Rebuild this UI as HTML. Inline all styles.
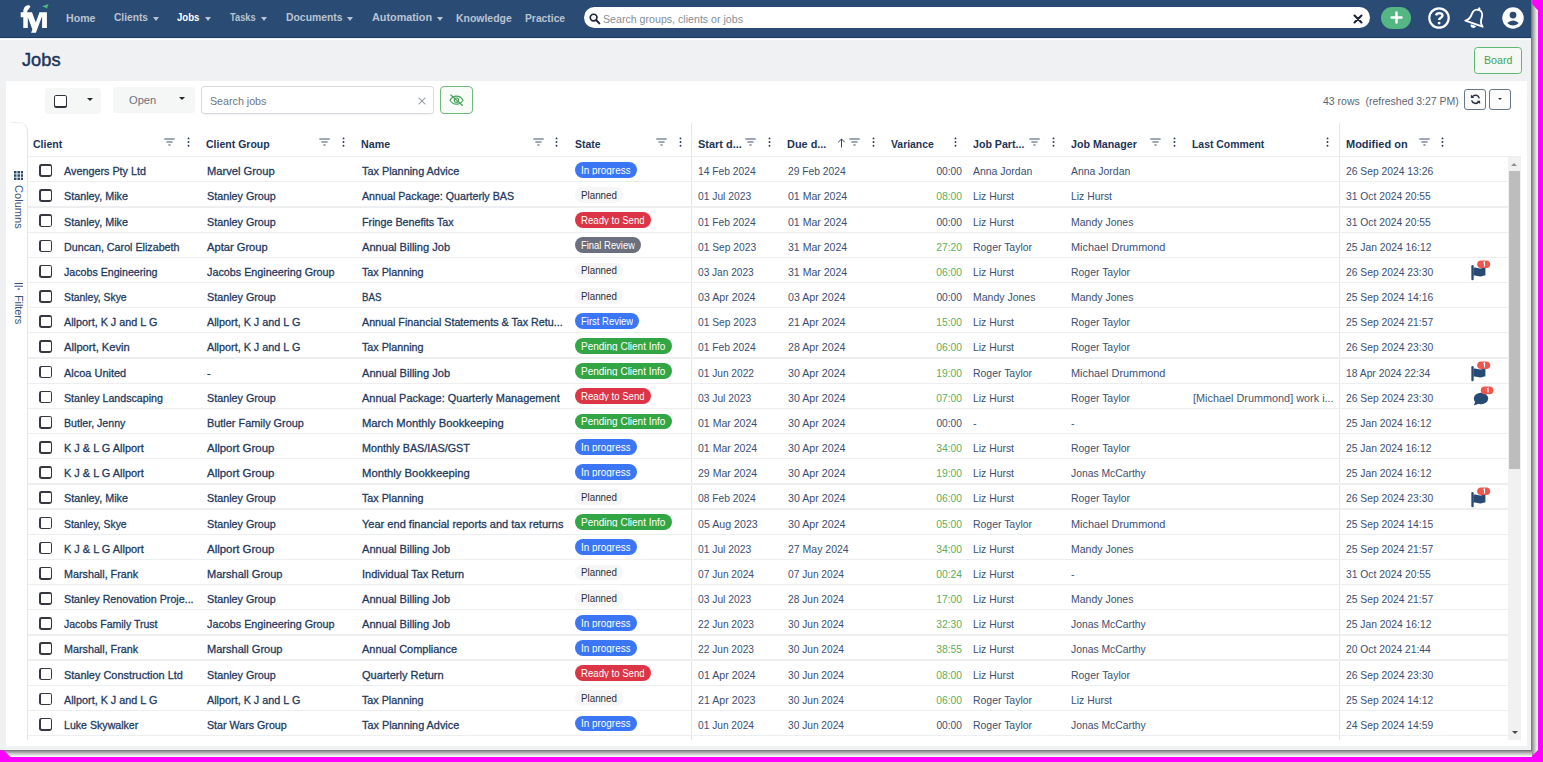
<!DOCTYPE html><html><head><meta charset="utf-8"><title>Jobs</title><style>
*{box-sizing:border-box}
html,body{margin:0;padding:0}
body{width:1543px;height:762px;background:#ff00ff;position:relative;overflow:hidden;font-family:"Liberation Sans",sans-serif;color:#213b61}
#app{position:absolute;left:0;top:0;width:1531px;height:750px;background:#f0f1f3;overflow:hidden}
.abs{position:absolute}
#nav{position:absolute;left:0;top:0;width:100%;height:38.2px;background:#2a4b73;border-bottom:1.3px solid #1d3b66}
#navline{position:absolute;left:0;top:38.2px;width:100%;height:1.8px;background:linear-gradient(180deg,#b9c3d1 0%,#fff 35%,#fff 100%)}
.nv{position:absolute;top:11.3px;font-size:10.6px;font-weight:bold;color:#b9c3d1;white-space:nowrap;line-height:13px;transform-origin:0 0}
.nv.act{color:#fff}
.caret{position:absolute;top:16.9px;width:0;height:0;border-left:3.3px solid transparent;border-right:3.3px solid transparent;border-top:4px solid #b9c3d1}
#title{position:absolute;left:22px;top:47px;font-size:19.5px;line-height:24px;color:#1d3557;-webkit-text-stroke:0.35px #1d3557}
#panel{position:absolute;left:5.5px;top:80.5px;width:1521.5px;height:665px;background:#fff}
.t{position:absolute;white-space:nowrap;font-size:11px;line-height:14px;color:#3a5073;transform-origin:0 0}
.t.b{color:#21395e;-webkit-text-stroke:0.28px #21395e}
.t.g{color:#5cae5c}
.t.c{color:#44566f}
.t.r{text-align:right;transform-origin:100% 0}
.h{position:absolute;white-space:nowrap;font-size:11px;line-height:14px;font-weight:bold;color:#1d3557;top:136.6px;transform-origin:0 0}
.hl{position:absolute;left:28px;width:1480px;height:1.3px;background:#eceef0}
.cb{position:absolute;left:39.3px;width:13px;height:12.7px;border-radius:2.4px;background:#353841}
.cb i{position:absolute;left:1.6px;top:1.6px;right:1.6px;bottom:1.6px;background:#fff;border-radius:0.9px}
.pill{position:absolute;left:574.9px;height:15.8px;border-radius:8px;color:#fff;overflow:hidden}
.pill span{position:absolute;left:6.5px;top:1.75px;font-size:10px;line-height:13px;height:11.3px;overflow:hidden;white-space:nowrap;transform-origin:0 0}
.p-blue{background:#3a76f5}
.p-red{background:#dc3545}
.p-grey{background:#6c6f7d}
.p-green{background:#32a544}
.p-light{background:#f6f6f7;color:#2c2f36}
.ic-f{position:absolute;top:138.3px}
.ic-m{position:absolute;top:137.3px}
.ic-a{position:absolute;top:137.5px}
.ric{position:absolute}
.vline{position:absolute;width:1.2px;background:#e4e7ea}
</style></head><body>
<div id="app">
<div id="nav"></div><div id="navline"></div>
<svg class="abs" style="left:0;top:0" width="60" height="38" viewBox="0 0 60 38">
<path d="M20.7 12.3H23.3C23.3 9 24.6 5.2 28 5.2C29.6 5.2 30.6 5.8 30.2 6.9C29.8 8.4 27.4 9.4 27 12.3H32L35.8 22.4L39.5 12.3H46.9V27.9H42.1V16.2L35.9 32.7H31.1L32.4 29.5L27.8 17.2V27.9H23.3V17.2H20.7Z" fill="#fff"/>
<path d="M41.9 6.2L48.6 4L46.9 8.7L45 7.6Z" fill="#44b978"/>
</svg>
<div class="nv" style="left:66px;top:12.3px;transform:scaleX(1.0021)">Home</div>
<div class="nv" style="left:113.7px;top:11.3px;transform:scaleX(0.9624)">Clients</div>
<div class="caret" style="left:152.8px"></div>
<div class="nv act" style="left:177.4px;top:11.3px;transform:scaleX(0.9056)">Jobs</div>
<div class="caret" style="left:204.7px"></div>
<div class="nv" style="left:229.6px;top:11.3px;transform:scaleX(0.8782)">Tasks</div>
<div class="caret" style="left:260.7px"></div>
<div class="nv" style="left:285.7px;top:11.3px;transform:scaleX(0.9811)">Documents</div>
<div class="caret" style="left:347.1px"></div>
<div class="nv" style="left:372px;top:11.3px;transform:scaleX(1.0211)">Automation</div>
<div class="caret" style="left:437px"></div>
<div class="nv" style="left:456.3px;top:12.3px;transform:scaleX(0.9873)">Knowledge</div>
<div class="nv" style="left:525px;top:12.3px;transform:scaleX(0.9725)">Practice</div>
<div class="abs" style="left:584.3px;top:7px;width:786px;height:21.4px;border-radius:10.7px;background:#fff"></div>
<svg class="abs" style="left:588.8px;top:13.2px" width="12" height="12" viewBox="0 0 12 12"><circle cx="4.6" cy="4.6" r="3.35" stroke="#1b2638" stroke-width="1.7" fill="none"/><path d="M7.2 7.2L10.4 10.4" stroke="#1b2638" stroke-width="2" stroke-linecap="round"/></svg>
<div class="abs" style="left:603px;top:11.74px;font-size:11.3px;line-height:14.69px;color:#858e99;white-space:nowrap;transform-origin:0 0;transform:scaleX(0.9407);">Search groups, clients or jobs</div>
<svg class="abs" style="left:1352.8px;top:13.6px" width="10" height="10" viewBox="0 0 10 10"><path d="M1.5 1.5L8.5 8.5M8.5 1.5L1.5 8.5" stroke="#1c2430" stroke-width="2.1" stroke-linecap="round"/></svg>
<div class="abs" style="left:1381.2px;top:6.8px;width:29.8px;height:22.4px;border-radius:11.2px;background:#53b683"></div>
<svg class="abs" style="left:1390.1px;top:11.1px" width="13" height="13" viewBox="0 0 13 13"><path d="M6.5 1.5V11.5M1.5 6.5H11.5" stroke="#fff" stroke-width="2.4" stroke-linecap="round"/></svg>
<svg class="abs" style="left:1427.2px;top:6.3px" width="24" height="24" viewBox="-12 -12 24 24"><circle cx="0" cy="0" r="9.7" stroke="#fff" stroke-width="2.2" fill="none"/><path d="M-3 -2.6C-2.6 -4.1 -1.4 -4.8 0.2 -4.8C2.2 -4.8 3.5 -3.8 3.5 -2.4C3.5 -0.2 0.1 -0.3 0.1 2.1" stroke="#fff" stroke-width="2.4" fill="none"/><circle cx="0.1" cy="5.1" r="1.45" fill="#fff"/></svg>
<svg class="abs" style="left:1461.65px;top:4.1px" width="28" height="28" viewBox="-14 -14 28 28"><g transform="rotate(19.5)"><path d="M-9.2 6C-7 4.5 -5.3 2.5 -5.3 -2C-5.3 -6 -3 -8.6 0 -8.6C3 -8.6 5.3 -6 5.3 -2C5.3 2.5 7 4.5 9.2 6Z" stroke="#fff" stroke-width="1.9" fill="none" stroke-linejoin="round"/><path d="M0 -8.6V-10.1" stroke="#fff" stroke-width="2.2" stroke-linecap="round"/><path d="M-2.8 7.6A2.8 2.8 0 0 0 2.8 7.6Z" fill="#fff"/></g></svg>
<svg class="abs" style="left:1500.7px;top:6.35px" width="24" height="24" viewBox="-12 -12 24 24"><circle cx="0" cy="0" r="10.75" fill="#fff"/><circle cx="0" cy="-2.9" r="3.4" fill="#2a4b73"/><path d="M-5.9 5Q0 -0.2 5.9 5Q0 10.2 -5.9 5Z" fill="#2a4a72"/></svg>
<div class="abs" style="left:22.4px;top:48.07px;font-size:18.9px;line-height:24.57px;color:#1d3557;white-space:nowrap;transform-origin:0 0;transform:scaleX(0.9648);-webkit-text-stroke:0.45px #1d3557;">Jobs</div>
<div class="abs" style="left:1474px;top:46.8px;width:47.6px;height:27.1px;border:1.4px solid #5fb871;border-radius:3.5px;background:#f5f8f5"></div>
<div class="abs" style="left:1483.5px;top:52.84px;font-size:11.2px;line-height:14.56px;color:#3fa556;white-space:nowrap;transform-origin:0 0;transform:scaleX(0.9511);">Board</div>
<div id="panel"></div>
<div class="abs" style="left:44.8px;top:87.9px;width:56.3px;height:26px;background:#f5f6f6;border-radius:3px"></div>
<div class="abs" style="left:53.6px;top:94.7px;width:13.6px;height:13.4px;border-radius:2.5px;background:#2f323b"><i style="position:absolute;left:1.7px;top:1.7px;right:1.7px;bottom:1.7px;background:#fff;border-radius:0.9px"></i></div>
<div class="abs" style="left:87px;top:98px;width:0;height:0;border-left:3.2px solid transparent;border-right:3.2px solid transparent;border-top:3.9px solid #23272e"></div>
<div class="abs" style="left:113.3px;top:86.8px;width:82px;height:26px;background:#f5f6f6;border-radius:3px"></div>
<div class="abs" style="left:128.8px;top:93.14px;font-size:11px;line-height:14.3px;color:#6b737f;white-space:nowrap;transform-origin:0 0;transform:scaleX(1.0103);">Open</div>
<div class="abs" style="left:179px;top:97.3px;width:0;height:0;border-left:3.4px solid transparent;border-right:3.4px solid transparent;border-top:3.9px solid #23272e"></div>
<div class="abs" style="left:200.5px;top:86.1px;width:233.9px;height:27.8px;background:#fff;border:1.2px solid #d6d9dd;border-radius:3.5px;box-shadow:0 0.5px 1px rgba(0,0,0,.05)"></div>
<div class="abs" style="left:210px;top:93.64px;font-size:11.2px;line-height:14.56px;color:#6e7783;white-space:nowrap;transform-origin:0 0;transform:scaleX(0.9544);">Search jobs</div>
<svg class="abs" style="left:417.6px;top:96.6px" width="8" height="8" viewBox="0 0 8 8"><path d="M0.6 0.6L7.4 7.4M7.4 0.6L0.6 7.4" stroke="#9aa0a8" stroke-width="1.05"/></svg>
<div class="abs" style="left:439.8px;top:86.1px;width:33.1px;height:27.8px;background:#f8fbf8;border:1.3px solid #6dbb7a;border-radius:4px"></div>
<svg class="abs" style="left:449px;top:93.6px" width="15" height="12.4" viewBox="0 0 15 12.4"><path d="M1 6.2C2.6 3.6 4.8 2.2 7.5 2.2C10.2 2.2 12.4 3.6 14 6.2C12.4 8.8 10.2 10.2 7.5 10.2C4.8 10.2 2.6 8.8 1 6.2Z" stroke="#45a35a" stroke-width="1.15" fill="none"/><circle cx="7.5" cy="6.2" r="2.2" stroke="#45a35a" stroke-width="1.15" fill="none"/><path d="M1.4 0.6L13.8 11.8" stroke="#45a35a" stroke-width="1.25"/></svg>
<div class="abs" style="left:1322.5px;top:93.94px;font-size:11px;line-height:14.3px;color:#5d6673;white-space:nowrap;transform-origin:0 0;transform:scaleX(0.9533);">43 rows&nbsp; (refreshed 3:27 PM)</div>
<div class="abs" style="left:1463.7px;top:88.5px;width:22.1px;height:21.8px;border:1.2px solid #68748a;border-radius:3px;background:#fcfcfd"></div>
<svg class="abs" style="left:1469.5px;top:94.3px" width="11" height="10.6" viewBox="0 0 11 10.6"><path d="M9.3 4.3A3.9 3.9 0 0 0 2.3 2.9M1.7 6.3A3.9 3.9 0 0 0 8.7 7.7" stroke="#2d333d" stroke-width="1.5" fill="none"/><path d="M0.9 0.5V3.9H4.3Z" fill="#2d333d"/><path d="M10.1 10.1V6.7H6.7Z" fill="#2d333d"/></svg>
<div class="abs" style="left:1489.4px;top:88.5px;width:21.7px;height:21.8px;border:1.2px solid #68748a;border-radius:3px;background:#fcfcfd"></div>
<div class="abs" style="left:1498.4px;top:98.3px;width:0;height:0;border-left:2.3px solid transparent;border-right:2.3px solid transparent;border-top:2.4px solid #2d333d"></div>
<svg class="abs" style="left:13.7px;top:171.2px" width="9.5" height="9.2" viewBox="0 0 9.5 9.2"><g fill="#2a4a72"><rect x="0" y="0" width="2.5" height="2.5"/><rect x="0" y="3.3" width="2.5" height="2.5"/><rect x="0" y="6.6" width="2.5" height="2.5"/><rect x="3.45" y="0" width="2.5" height="2.5"/><rect x="3.45" y="3.3" width="2.5" height="2.5"/><rect x="3.45" y="6.6" width="2.5" height="2.5"/><rect x="6.9" y="0" width="2.5" height="2.5"/><rect x="6.9" y="3.3" width="2.5" height="2.5"/><rect x="6.9" y="6.6" width="2.5" height="2.5"/></g></svg>
<div class="abs" style="left:11.6px;top:184.6px;width:13px;height:43px;writing-mode:vertical-rl;font-size:11px;line-height:13px;color:#38527a;white-space:nowrap;letter-spacing:0.05px">Columns</div>
<svg class="abs" style="left:13.7px;top:282.6px" width="9.6" height="7.6" viewBox="0 0 9.6 7.6"><path d="M0.4 0.6H9.2M0.4 3.2H9.2" stroke="#38527a" stroke-width="1.05"/><path d="M3.4 5.4L4.8 7.4L6.2 5.4Z" fill="#38527a"/></svg>
<div class="abs" style="left:11.6px;top:295.2px;width:13px;height:30px;writing-mode:vertical-rl;font-size:11px;line-height:13px;color:#38527a;white-space:nowrap;letter-spacing:-0.1px">Filters</div>
<div class="abs" style="left:10.5px;top:122px;width:17.5px;height:618px;border-top:1px solid #ebedef;border-right:1px solid #e4e7ea;border-top-right-radius:9px"></div>
<div class="h" style="left:33px;transform:scaleX(0.9587)">Client</div>
<div class="h" style="left:206px;transform:scaleX(0.9563)">Client Group</div>
<div class="h" style="left:361px;transform:scaleX(0.971)">Name</div>
<div class="h" style="left:575px;transform:scaleX(0.9477)">State</div>
<div class="h" style="left:698px;transform:scaleX(0.9951)">Start d...</div>
<div class="h" style="left:787px;transform:scaleX(0.9916)">Due d...</div>
<div class="h" style="left:891px;transform:scaleX(0.9455)">Variance</div>
<div class="h" style="left:973px;transform:scaleX(0.9664)">Job Part...</div>
<div class="h" style="left:1071px;transform:scaleX(0.9697)">Job Manager</div>
<div class="h" style="left:1192px;transform:scaleX(0.9463)">Last Comment</div>
<div class="h" style="left:1346px;transform:scaleX(0.9981)">Modified on</div>
<svg class="ic-f" style="left:164.2px" width="11" height="8" viewBox="0 0 11 8"><path d="M0.3 1h10.4M2.4 4h6.2M4.4 7h2.2" stroke="#3d506c" stroke-width="1.1" fill="none"/></svg>
<svg class="ic-f" style="left:319.4px" width="11" height="8" viewBox="0 0 11 8"><path d="M0.3 1h10.4M2.4 4h6.2M4.4 7h2.2" stroke="#3d506c" stroke-width="1.1" fill="none"/></svg>
<svg class="ic-f" style="left:532.7px" width="11" height="8" viewBox="0 0 11 8"><path d="M0.3 1h10.4M2.4 4h6.2M4.4 7h2.2" stroke="#3d506c" stroke-width="1.1" fill="none"/></svg>
<svg class="ic-f" style="left:655.8px" width="11" height="8" viewBox="0 0 11 8"><path d="M0.3 1h10.4M2.4 4h6.2M4.4 7h2.2" stroke="#3d506c" stroke-width="1.1" fill="none"/></svg>
<svg class="ic-f" style="left:745.3px" width="11" height="8" viewBox="0 0 11 8"><path d="M0.3 1h10.4M2.4 4h6.2M4.4 7h2.2" stroke="#3d506c" stroke-width="1.1" fill="none"/></svg>
<svg class="ic-f" style="left:848.8px" width="11" height="8" viewBox="0 0 11 8"><path d="M0.3 1h10.4M2.4 4h6.2M4.4 7h2.2" stroke="#3d506c" stroke-width="1.1" fill="none"/></svg>
<svg class="ic-f" style="left:1029.3px" width="11" height="8" viewBox="0 0 11 8"><path d="M0.3 1h10.4M2.4 4h6.2M4.4 7h2.2" stroke="#3d506c" stroke-width="1.1" fill="none"/></svg>
<svg class="ic-f" style="left:1149.8px" width="11" height="8" viewBox="0 0 11 8"><path d="M0.3 1h10.4M2.4 4h6.2M4.4 7h2.2" stroke="#3d506c" stroke-width="1.1" fill="none"/></svg>
<svg class="ic-f" style="left:1418.8px" width="11" height="8" viewBox="0 0 11 8"><path d="M0.3 1h10.4M2.4 4h6.2M4.4 7h2.2" stroke="#3d506c" stroke-width="1.1" fill="none"/></svg>
<svg class="ic-m" style="left:186.6px" width="3" height="11" viewBox="0 0 3 11"><circle cx="1.5" cy="1.4" r="0.95" fill="#263a57"/><circle cx="1.5" cy="5.05" r="0.95" fill="#263a57"/><circle cx="1.5" cy="8.7" r="0.95" fill="#263a57"/></svg>
<svg class="ic-m" style="left:341.6px" width="3" height="11" viewBox="0 0 3 11"><circle cx="1.5" cy="1.4" r="0.95" fill="#263a57"/><circle cx="1.5" cy="5.05" r="0.95" fill="#263a57"/><circle cx="1.5" cy="8.7" r="0.95" fill="#263a57"/></svg>
<svg class="ic-m" style="left:555.4px" width="3" height="11" viewBox="0 0 3 11"><circle cx="1.5" cy="1.4" r="0.95" fill="#263a57"/><circle cx="1.5" cy="5.05" r="0.95" fill="#263a57"/><circle cx="1.5" cy="8.7" r="0.95" fill="#263a57"/></svg>
<svg class="ic-m" style="left:678.5px" width="3" height="11" viewBox="0 0 3 11"><circle cx="1.5" cy="1.4" r="0.95" fill="#263a57"/><circle cx="1.5" cy="5.05" r="0.95" fill="#263a57"/><circle cx="1.5" cy="8.7" r="0.95" fill="#263a57"/></svg>
<svg class="ic-m" style="left:767.6px" width="3" height="11" viewBox="0 0 3 11"><circle cx="1.5" cy="1.4" r="0.95" fill="#263a57"/><circle cx="1.5" cy="5.05" r="0.95" fill="#263a57"/><circle cx="1.5" cy="8.7" r="0.95" fill="#263a57"/></svg>
<svg class="ic-m" style="left:871.6px" width="3" height="11" viewBox="0 0 3 11"><circle cx="1.5" cy="1.4" r="0.95" fill="#263a57"/><circle cx="1.5" cy="5.05" r="0.95" fill="#263a57"/><circle cx="1.5" cy="8.7" r="0.95" fill="#263a57"/></svg>
<svg class="ic-m" style="left:953.6px" width="3" height="11" viewBox="0 0 3 11"><circle cx="1.5" cy="1.4" r="0.95" fill="#263a57"/><circle cx="1.5" cy="5.05" r="0.95" fill="#263a57"/><circle cx="1.5" cy="8.7" r="0.95" fill="#263a57"/></svg>
<svg class="ic-m" style="left:1051.6px" width="3" height="11" viewBox="0 0 3 11"><circle cx="1.5" cy="1.4" r="0.95" fill="#263a57"/><circle cx="1.5" cy="5.05" r="0.95" fill="#263a57"/><circle cx="1.5" cy="8.7" r="0.95" fill="#263a57"/></svg>
<svg class="ic-m" style="left:1172.6px" width="3" height="11" viewBox="0 0 3 11"><circle cx="1.5" cy="1.4" r="0.95" fill="#263a57"/><circle cx="1.5" cy="5.05" r="0.95" fill="#263a57"/><circle cx="1.5" cy="8.7" r="0.95" fill="#263a57"/></svg>
<svg class="ic-m" style="left:1325.6px" width="3" height="11" viewBox="0 0 3 11"><circle cx="1.5" cy="1.4" r="0.95" fill="#263a57"/><circle cx="1.5" cy="5.05" r="0.95" fill="#263a57"/><circle cx="1.5" cy="8.7" r="0.95" fill="#263a57"/></svg>
<svg class="ic-m" style="left:1440.6px" width="3" height="11" viewBox="0 0 3 11"><circle cx="1.5" cy="1.4" r="0.95" fill="#263a57"/><circle cx="1.5" cy="5.05" r="0.95" fill="#263a57"/><circle cx="1.5" cy="8.7" r="0.95" fill="#263a57"/></svg>
<svg class="ic-a" style="left:836.5px" width="9" height="10" viewBox="0 0 9 10"><path d="M4.5 9.5V1M1.2 4.3L4.5 1L7.8 4.3" stroke="#30445f" stroke-width="1" fill="none"/></svg>
<div class="vline" style="left:690.8px;top:122.5px;height:617.5px"></div>
<div class="vline" style="left:1338.8px;top:122.5px;height:617.5px"></div>
<div class="hl" style="top:156.0px;width:1493px"></div>
<div class="hl" style="top:181.17px"></div>
<div class="cb" style="top:164.15px"><i></i></div>
<div class="t b" style="left:64.3px;top:164.20px;transform:scaleX(0.9811)">Avengers Pty Ltd</div>
<div class="t b" style="left:206.5px;top:164.20px;transform:scaleX(1.0144)">Marvel Group</div>
<div class="t b" style="left:361.5px;top:164.20px;transform:scaleX(0.9873)">Tax Planning Advice</div>
<div class="pill p-blue" style="top:161.90px;width:61.9px"><span style="transform:scaleX(0.9914)">In progress</span></div>
<div class="t d" style="left:698.4px;top:164.20px;transform:scaleX(0.9339)">14 Feb 2024</div>
<div class="t d" style="left:787.6px;top:164.20px;transform:scaleX(0.9339)">29 Feb 2024</div>
<div class="t d r" style="left:901.8px;width:60px;top:164.20px;transform:scaleX(0.9299)">00:00</div>
<div class="t " style="left:973.3px;top:164.20px;transform:scaleX(0.9505)">Anna Jordan</div>
<div class="t " style="left:1071.3px;top:164.20px;transform:scaleX(0.9505)">Anna Jordan</div>
<div class="t d" style="left:1345.6px;top:164.20px;transform:scaleX(0.937)">26 Sep 2024 13:26</div>
<div class="hl" style="top:206.34px"></div>
<div class="cb" style="top:189.32px"><i></i></div>
<div class="t b" style="left:64.3px;top:189.37px;transform:scaleX(0.9813)">Stanley, Mike</div>
<div class="t b" style="left:206.5px;top:189.37px;transform:scaleX(0.9783)">Stanley Group</div>
<div class="t b" style="left:361.5px;top:189.37px;transform:scaleX(0.9711)">Annual Package: Quarterly BAS</div>
<div class="pill p-light" style="top:187.07px;width:48.0px"><span style="transform:scaleX(0.9781)">Planned</span></div>
<div class="t d" style="left:698.4px;top:189.37px;transform:scaleX(0.9334)">01 Jul 2023</div>
<div class="t d" style="left:787.6px;top:189.37px;transform:scaleX(0.9585)">01 Mar 2024</div>
<div class="t d r g" style="left:901.8px;width:60px;top:189.37px;transform:scaleX(0.937)">08:00</div>
<div class="t " style="left:973.3px;top:189.37px;transform:scaleX(0.9446)">Liz Hurst</div>
<div class="t " style="left:1071.3px;top:189.37px;transform:scaleX(0.9446)">Liz Hurst</div>
<div class="t d" style="left:1345.6px;top:189.37px;transform:scaleX(0.937)">31 Oct 2024 20:55</div>
<div class="hl" style="top:231.51px"></div>
<div class="cb" style="top:214.49px"><i></i></div>
<div class="t b" style="left:64.3px;top:214.54px;transform:scaleX(0.9813)">Stanley, Mike</div>
<div class="t b" style="left:206.5px;top:214.54px;transform:scaleX(0.9783)">Stanley Group</div>
<div class="t b" style="left:361.5px;top:214.54px;transform:scaleX(0.9759)">Fringe Benefits Tax</div>
<div class="pill p-red" style="top:212.24px;width:76.2px"><span style="transform:scaleX(0.9626)">Ready to Send</span></div>
<div class="t d" style="left:698.4px;top:214.54px;transform:scaleX(0.9339)">01 Feb 2024</div>
<div class="t d" style="left:787.6px;top:214.54px;transform:scaleX(0.9585)">01 Mar 2024</div>
<div class="t d r" style="left:901.8px;width:60px;top:214.54px;transform:scaleX(0.9299)">00:00</div>
<div class="t " style="left:973.3px;top:214.54px;transform:scaleX(0.9446)">Liz Hurst</div>
<div class="t " style="left:1071.3px;top:214.54px;transform:scaleX(0.9536)">Mandy Jones</div>
<div class="t d" style="left:1345.6px;top:214.54px;transform:scaleX(0.937)">31 Oct 2024 20:55</div>
<div class="hl" style="top:256.68px"></div>
<div class="cb" style="top:239.66px"><i></i></div>
<div class="t b" style="left:64.3px;top:239.71px;transform:scaleX(0.9737)">Duncan, Carol Elizabeth</div>
<div class="t b" style="left:206.5px;top:239.71px;transform:scaleX(1.013)">Aptar Group</div>
<div class="t b" style="left:361.5px;top:239.71px;transform:scaleX(1.0074)">Annual Billing Job</div>
<div class="pill p-grey" style="top:237.41px;width:66.5px"><span style="transform:scaleX(0.9432)">Final Review</span></div>
<div class="t d" style="left:698.4px;top:239.71px;transform:scaleX(0.9312)">01 Sep 2023</div>
<div class="t d" style="left:787.6px;top:239.71px;transform:scaleX(0.9585)">31 Mar 2024</div>
<div class="t d r g" style="left:901.8px;width:60px;top:239.71px;transform:scaleX(0.937)">27:20</div>
<div class="t " style="left:973.3px;top:239.71px;transform:scaleX(0.949)">Roger Taylor</div>
<div class="t " style="left:1071.3px;top:239.71px;transform:scaleX(0.9898)">Michael Drummond</div>
<div class="t d" style="left:1345.6px;top:239.71px;transform:scaleX(0.937)">25 Jan 2024 16:12</div>
<div class="hl" style="top:281.85px"></div>
<div class="cb" style="top:264.83px"><i></i></div>
<div class="t b" style="left:64.3px;top:264.88px;transform:scaleX(0.9677)">Jacobs Engineering</div>
<div class="t b" style="left:206.5px;top:264.88px;transform:scaleX(0.9797)">Jacobs Engineering Group</div>
<div class="t b" style="left:361.5px;top:264.88px;transform:scaleX(0.9762)">Tax Planning</div>
<div class="pill p-light" style="top:262.58px;width:48.0px"><span style="transform:scaleX(0.9781)">Planned</span></div>
<div class="t d" style="left:698.4px;top:264.88px;transform:scaleX(0.9197)">03 Jan 2023</div>
<div class="t d" style="left:787.6px;top:264.88px;transform:scaleX(0.9585)">31 Mar 2024</div>
<div class="t d r g" style="left:901.8px;width:60px;top:264.88px;transform:scaleX(0.937)">06:00</div>
<div class="t " style="left:973.3px;top:264.88px;transform:scaleX(0.9446)">Liz Hurst</div>
<div class="t " style="left:1071.3px;top:264.88px;transform:scaleX(0.949)">Roger Taylor</div>
<div class="t d" style="left:1345.6px;top:264.88px;transform:scaleX(0.937)">26 Sep 2024 23:30</div>
<svg class="ric" style="left:1465px;top:257.98px" width="30" height="25" viewBox="1465 0 30 25"><path d="M1472.5 8.2V21.2" stroke="#274a75" stroke-width="2.3" stroke-linecap="round" fill="none"/><path d="M1473.4 9.8C1476 8.8 1478 10.6 1480.5 10.4C1482.5 10.2 1484 9.4 1485.4 9.8V17.6C1484 17.2 1482.5 18.2 1480.5 18.4C1478 18.6 1476 16.8 1473.4 17.8Z" fill="#274a75"/><rect x="1477.2" y="2.4" width="13" height="7.6" rx="3.8" fill="#f0564d"/><path d="M1483.3 4.7L1484.5 4V8.5" stroke="#fff" stroke-width="1.1" fill="none"/></svg>
<div class="hl" style="top:307.02px"></div>
<div class="cb" style="top:290.00px"><i></i></div>
<div class="t b" style="left:64.3px;top:290.05px;transform:scaleX(0.942)">Stanley, Skye</div>
<div class="t b" style="left:206.5px;top:290.05px;transform:scaleX(0.9783)">Stanley Group</div>
<div class="t b" style="left:361.5px;top:290.05px;transform:scaleX(0.8812)">BAS</div>
<div class="pill p-light" style="top:287.75px;width:48.0px"><span style="transform:scaleX(0.9781)">Planned</span></div>
<div class="t d" style="left:698.4px;top:290.05px;transform:scaleX(0.9689)">03 Apr 2024</div>
<div class="t d" style="left:787.6px;top:290.05px;transform:scaleX(0.9689)">03 Apr 2024</div>
<div class="t d r" style="left:901.8px;width:60px;top:290.05px;transform:scaleX(0.9299)">00:00</div>
<div class="t " style="left:973.3px;top:290.05px;transform:scaleX(0.9536)">Mandy Jones</div>
<div class="t " style="left:1071.3px;top:290.05px;transform:scaleX(0.9536)">Mandy Jones</div>
<div class="t d" style="left:1345.6px;top:290.05px;transform:scaleX(0.937)">25 Sep 2024 14:16</div>
<div class="hl" style="top:332.19px"></div>
<div class="cb" style="top:315.17px"><i></i></div>
<div class="t b" style="left:64.3px;top:315.22px;transform:scaleX(0.9823)">Allport, K J and L G</div>
<div class="t b" style="left:206.5px;top:315.22px;transform:scaleX(0.9823)">Allport, K J and L G</div>
<div class="t b" style="left:361.5px;top:315.22px;transform:scaleX(0.9749)">Annual Financial Statements &amp; Tax Retu...</div>
<div class="pill p-blue" style="top:312.92px;width:64.3px"><span style="transform:scaleX(0.9488)">First Review</span></div>
<div class="t d" style="left:698.4px;top:315.22px;transform:scaleX(0.9312)">01 Sep 2023</div>
<div class="t d" style="left:787.6px;top:315.22px;transform:scaleX(0.9689)">21 Apr 2024</div>
<div class="t d r g" style="left:901.8px;width:60px;top:315.22px;transform:scaleX(0.937)">15:00</div>
<div class="t " style="left:973.3px;top:315.22px;transform:scaleX(0.9446)">Liz Hurst</div>
<div class="t " style="left:1071.3px;top:315.22px;transform:scaleX(0.949)">Roger Taylor</div>
<div class="t d" style="left:1345.6px;top:315.22px;transform:scaleX(0.937)">25 Sep 2024 21:57</div>
<div class="hl" style="top:357.36px"></div>
<div class="cb" style="top:340.34px"><i></i></div>
<div class="t b" style="left:64.3px;top:340.39px;transform:scaleX(1.0152)">Allport, Kevin</div>
<div class="t b" style="left:206.5px;top:340.39px;transform:scaleX(0.9823)">Allport, K J and L G</div>
<div class="t b" style="left:361.5px;top:340.39px;transform:scaleX(0.9762)">Tax Planning</div>
<div class="pill p-green" style="top:338.09px;width:97.0px"><span style="transform:scaleX(0.9986)">Pending Client Info</span></div>
<div class="t d" style="left:698.4px;top:340.39px;transform:scaleX(0.9339)">01 Feb 2024</div>
<div class="t d" style="left:787.6px;top:340.39px;transform:scaleX(0.9689)">28 Apr 2024</div>
<div class="t d r g" style="left:901.8px;width:60px;top:340.39px;transform:scaleX(0.937)">06:00</div>
<div class="t " style="left:973.3px;top:340.39px;transform:scaleX(0.9446)">Liz Hurst</div>
<div class="t " style="left:1071.3px;top:340.39px;transform:scaleX(0.949)">Roger Taylor</div>
<div class="t d" style="left:1345.6px;top:340.39px;transform:scaleX(0.937)">26 Sep 2024 23:30</div>
<div class="hl" style="top:382.53px"></div>
<div class="cb" style="top:365.51px"><i></i></div>
<div class="t b" style="left:64.3px;top:365.56px;transform:scaleX(0.9972)">Alcoa United</div>
<div class="t b" style="left:206.5px;top:365.56px;transform:scaleX(0.9804)">-</div>
<div class="t b" style="left:361.5px;top:365.56px;transform:scaleX(1.0074)">Annual Billing Job</div>
<div class="pill p-green" style="top:363.26px;width:97.0px"><span style="transform:scaleX(0.9986)">Pending Client Info</span></div>
<div class="t d" style="left:698.4px;top:365.56px;transform:scaleX(0.9247)">01 Jun 2022</div>
<div class="t d" style="left:787.6px;top:365.56px;transform:scaleX(0.9689)">30 Apr 2024</div>
<div class="t d r g" style="left:901.8px;width:60px;top:365.56px;transform:scaleX(0.937)">19:00</div>
<div class="t " style="left:973.3px;top:365.56px;transform:scaleX(0.949)">Roger Taylor</div>
<div class="t " style="left:1071.3px;top:365.56px;transform:scaleX(0.9898)">Michael Drummond</div>
<div class="t d" style="left:1345.6px;top:365.56px;transform:scaleX(0.937)">18 Apr 2024 22:34</div>
<svg class="ric" style="left:1465px;top:358.66px" width="30" height="25" viewBox="1465 0 30 25"><path d="M1472.5 8.2V21.2" stroke="#274a75" stroke-width="2.3" stroke-linecap="round" fill="none"/><path d="M1473.4 9.8C1476 8.8 1478 10.6 1480.5 10.4C1482.5 10.2 1484 9.4 1485.4 9.8V17.6C1484 17.2 1482.5 18.2 1480.5 18.4C1478 18.6 1476 16.8 1473.4 17.8Z" fill="#274a75"/><rect x="1477.2" y="2.4" width="13" height="7.6" rx="3.8" fill="#f0564d"/><path d="M1483.3 4.7L1484.5 4V8.5" stroke="#fff" stroke-width="1.1" fill="none"/></svg>
<div class="hl" style="top:407.70px"></div>
<div class="cb" style="top:390.68px"><i></i></div>
<div class="t b" style="left:64.3px;top:390.73px;transform:scaleX(0.9683)">Stanley Landscaping</div>
<div class="t b" style="left:206.5px;top:390.73px;transform:scaleX(0.9783)">Stanley Group</div>
<div class="t b" style="left:361.5px;top:390.73px;transform:scaleX(0.9948)">Annual Package: Quarterly Management</div>
<div class="pill p-red" style="top:388.43px;width:76.2px"><span style="transform:scaleX(0.9626)">Ready to Send</span></div>
<div class="t d" style="left:698.4px;top:390.73px;transform:scaleX(0.9334)">03 Jul 2023</div>
<div class="t d" style="left:787.6px;top:390.73px;transform:scaleX(0.9689)">30 Apr 2024</div>
<div class="t d r g" style="left:901.8px;width:60px;top:390.73px;transform:scaleX(0.937)">07:00</div>
<div class="t " style="left:973.3px;top:390.73px;transform:scaleX(0.9446)">Liz Hurst</div>
<div class="t " style="left:1071.3px;top:390.73px;transform:scaleX(0.949)">Roger Taylor</div>
<div class="t c" style="left:1192.5px;top:390.73px;transform:scaleX(0.9871)">[Michael Drummond] work i...</div>
<div class="t d" style="left:1345.6px;top:390.73px;transform:scaleX(0.937)">26 Sep 2024 23:30</div>
<svg class="ric" style="left:1465px;top:383.83px" width="30" height="25" viewBox="1465 0 30 25"><ellipse cx="1481" cy="14.5" rx="7.2" ry="5.7" fill="#274a75"/><path d="M1475.4 17.2L1473.9 21.4L1479.4 19.5Z" fill="#274a75"/><rect x="1480.8" y="2.6" width="12.6" height="7.6" rx="3.8" fill="#f0564d"/><path d="M1486.8 4.9L1488 4.2V8.7" stroke="#fff" stroke-width="1.1" fill="none"/></svg>
<div class="hl" style="top:432.87px"></div>
<div class="cb" style="top:415.85px"><i></i></div>
<div class="t b" style="left:64.3px;top:415.90px;transform:scaleX(0.9655)">Butler, Jenny</div>
<div class="t b" style="left:206.5px;top:415.90px;transform:scaleX(0.9907)">Butler Family Group</div>
<div class="t b" style="left:361.5px;top:415.90px;transform:scaleX(1.0209)">March Monthly Bookkeeping</div>
<div class="pill p-green" style="top:413.60px;width:97.0px"><span style="transform:scaleX(0.9986)">Pending Client Info</span></div>
<div class="t d" style="left:698.4px;top:415.90px;transform:scaleX(0.9585)">01 Mar 2024</div>
<div class="t d" style="left:787.6px;top:415.90px;transform:scaleX(0.9689)">30 Apr 2024</div>
<div class="t d r" style="left:901.8px;width:60px;top:415.90px;transform:scaleX(0.9299)">00:00</div>
<div class="t " style="left:973.3px;top:415.90px;transform:scaleX(0.9804)">-</div>
<div class="t " style="left:1071.3px;top:415.90px;transform:scaleX(0.9804)">-</div>
<div class="t d" style="left:1345.6px;top:415.90px;transform:scaleX(0.937)">25 Jan 2024 16:12</div>
<div class="hl" style="top:458.04px"></div>
<div class="cb" style="top:441.02px"><i></i></div>
<div class="t b" style="left:64.3px;top:441.07px;transform:scaleX(0.9938)">K J &amp; L G Allport</div>
<div class="t b" style="left:206.5px;top:441.07px;transform:scaleX(1.0399)">Allport Group</div>
<div class="t b" style="left:361.5px;top:441.07px;transform:scaleX(0.9796)">Monthly BAS/IAS/GST</div>
<div class="pill p-blue" style="top:438.77px;width:61.9px"><span style="transform:scaleX(0.9914)">In progress</span></div>
<div class="t d" style="left:698.4px;top:441.07px;transform:scaleX(0.9585)">01 Mar 2024</div>
<div class="t d" style="left:787.6px;top:441.07px;transform:scaleX(0.9689)">30 Apr 2024</div>
<div class="t d r g" style="left:901.8px;width:60px;top:441.07px;transform:scaleX(0.937)">34:00</div>
<div class="t " style="left:973.3px;top:441.07px;transform:scaleX(0.9446)">Liz Hurst</div>
<div class="t " style="left:1071.3px;top:441.07px;transform:scaleX(0.949)">Roger Taylor</div>
<div class="t d" style="left:1345.6px;top:441.07px;transform:scaleX(0.937)">25 Jan 2024 16:12</div>
<div class="hl" style="top:483.21px"></div>
<div class="cb" style="top:466.19px"><i></i></div>
<div class="t b" style="left:64.3px;top:466.24px;transform:scaleX(0.9938)">K J &amp; L G Allport</div>
<div class="t b" style="left:206.5px;top:466.24px;transform:scaleX(1.0399)">Allport Group</div>
<div class="t b" style="left:361.5px;top:466.24px;transform:scaleX(1.0248)">Monthly Bookkeeping</div>
<div class="pill p-blue" style="top:463.94px;width:61.9px"><span style="transform:scaleX(0.9914)">In progress</span></div>
<div class="t d" style="left:698.4px;top:466.24px;transform:scaleX(0.9585)">29 Mar 2024</div>
<div class="t d" style="left:787.6px;top:466.24px;transform:scaleX(0.9689)">30 Apr 2024</div>
<div class="t d r g" style="left:901.8px;width:60px;top:466.24px;transform:scaleX(0.937)">19:00</div>
<div class="t " style="left:973.3px;top:466.24px;transform:scaleX(0.9446)">Liz Hurst</div>
<div class="t " style="left:1071.3px;top:466.24px;transform:scaleX(0.9398)">Jonas McCarthy</div>
<div class="t d" style="left:1345.6px;top:466.24px;transform:scaleX(0.937)">25 Jan 2024 16:12</div>
<div class="hl" style="top:508.38px"></div>
<div class="cb" style="top:491.36px"><i></i></div>
<div class="t b" style="left:64.3px;top:491.41px;transform:scaleX(0.9813)">Stanley, Mike</div>
<div class="t b" style="left:206.5px;top:491.41px;transform:scaleX(0.9783)">Stanley Group</div>
<div class="t b" style="left:361.5px;top:491.41px;transform:scaleX(0.9762)">Tax Planning</div>
<div class="pill p-light" style="top:489.11px;width:48.0px"><span style="transform:scaleX(0.9781)">Planned</span></div>
<div class="t d" style="left:698.4px;top:491.41px;transform:scaleX(0.9339)">08 Feb 2024</div>
<div class="t d" style="left:787.6px;top:491.41px;transform:scaleX(0.9689)">30 Apr 2024</div>
<div class="t d r g" style="left:901.8px;width:60px;top:491.41px;transform:scaleX(0.937)">06:00</div>
<div class="t " style="left:973.3px;top:491.41px;transform:scaleX(0.9446)">Liz Hurst</div>
<div class="t " style="left:1071.3px;top:491.41px;transform:scaleX(0.949)">Roger Taylor</div>
<div class="t d" style="left:1345.6px;top:491.41px;transform:scaleX(0.937)">26 Sep 2024 23:30</div>
<svg class="ric" style="left:1465px;top:484.51px" width="30" height="25" viewBox="1465 0 30 25"><path d="M1472.5 8.2V21.2" stroke="#274a75" stroke-width="2.3" stroke-linecap="round" fill="none"/><path d="M1473.4 9.8C1476 8.8 1478 10.6 1480.5 10.4C1482.5 10.2 1484 9.4 1485.4 9.8V17.6C1484 17.2 1482.5 18.2 1480.5 18.4C1478 18.6 1476 16.8 1473.4 17.8Z" fill="#274a75"/><rect x="1477.2" y="2.4" width="13" height="7.6" rx="3.8" fill="#f0564d"/><path d="M1483.3 4.7L1484.5 4V8.5" stroke="#fff" stroke-width="1.1" fill="none"/></svg>
<div class="hl" style="top:533.55px"></div>
<div class="cb" style="top:516.53px"><i></i></div>
<div class="t b" style="left:64.3px;top:516.58px;transform:scaleX(0.942)">Stanley, Skye</div>
<div class="t b" style="left:206.5px;top:516.58px;transform:scaleX(0.9783)">Stanley Group</div>
<div class="t b" style="left:361.5px;top:516.58px;transform:scaleX(1.0031)">Year end financial reports and tax returns</div>
<div class="pill p-green" style="top:514.28px;width:97.0px"><span style="transform:scaleX(0.9986)">Pending Client Info</span></div>
<div class="t d" style="left:698.4px;top:516.58px;transform:scaleX(0.9677)">05 Aug 2023</div>
<div class="t d" style="left:787.6px;top:516.58px;transform:scaleX(0.9689)">30 Apr 2024</div>
<div class="t d r g" style="left:901.8px;width:60px;top:516.58px;transform:scaleX(0.937)">05:00</div>
<div class="t " style="left:973.3px;top:516.58px;transform:scaleX(0.949)">Roger Taylor</div>
<div class="t " style="left:1071.3px;top:516.58px;transform:scaleX(0.9898)">Michael Drummond</div>
<div class="t d" style="left:1345.6px;top:516.58px;transform:scaleX(0.937)">25 Sep 2024 14:15</div>
<div class="hl" style="top:558.72px"></div>
<div class="cb" style="top:541.70px"><i></i></div>
<div class="t b" style="left:64.3px;top:541.75px;transform:scaleX(0.9938)">K J &amp; L G Allport</div>
<div class="t b" style="left:206.5px;top:541.75px;transform:scaleX(1.0399)">Allport Group</div>
<div class="t b" style="left:361.5px;top:541.75px;transform:scaleX(1.0074)">Annual Billing Job</div>
<div class="pill p-blue" style="top:539.45px;width:61.9px"><span style="transform:scaleX(0.9914)">In progress</span></div>
<div class="t d" style="left:698.4px;top:541.75px;transform:scaleX(0.9334)">01 Jul 2023</div>
<div class="t d" style="left:787.6px;top:541.75px;transform:scaleX(0.9543)">27 May 2024</div>
<div class="t d r g" style="left:901.8px;width:60px;top:541.75px;transform:scaleX(0.937)">34:00</div>
<div class="t " style="left:973.3px;top:541.75px;transform:scaleX(0.9446)">Liz Hurst</div>
<div class="t " style="left:1071.3px;top:541.75px;transform:scaleX(0.9536)">Mandy Jones</div>
<div class="t d" style="left:1345.6px;top:541.75px;transform:scaleX(0.937)">25 Sep 2024 21:57</div>
<div class="hl" style="top:583.89px"></div>
<div class="cb" style="top:566.87px"><i></i></div>
<div class="t b" style="left:64.3px;top:566.92px;transform:scaleX(0.9776)">Marshall, Frank</div>
<div class="t b" style="left:206.5px;top:566.92px;transform:scaleX(1.0039)">Marshall Group</div>
<div class="t b" style="left:361.5px;top:566.92px;transform:scaleX(0.9968)">Individual Tax Return</div>
<div class="pill p-light" style="top:564.62px;width:48.0px"><span style="transform:scaleX(0.9781)">Planned</span></div>
<div class="t d" style="left:698.4px;top:566.92px;transform:scaleX(0.9247)">07 Jun 2024</div>
<div class="t d" style="left:787.6px;top:566.92px;transform:scaleX(0.9247)">07 Jun 2024</div>
<div class="t d r g" style="left:901.8px;width:60px;top:566.92px;transform:scaleX(0.937)">00:24</div>
<div class="t " style="left:973.3px;top:566.92px;transform:scaleX(0.9446)">Liz Hurst</div>
<div class="t " style="left:1071.3px;top:566.92px;transform:scaleX(0.9804)">-</div>
<div class="t d" style="left:1345.6px;top:566.92px;transform:scaleX(0.937)">31 Oct 2024 20:55</div>
<div class="hl" style="top:609.06px"></div>
<div class="cb" style="top:592.04px"><i></i></div>
<div class="t b" style="left:64.3px;top:592.09px;transform:scaleX(0.9722)">Stanley Renovation Proje...</div>
<div class="t b" style="left:206.5px;top:592.09px;transform:scaleX(0.9783)">Stanley Group</div>
<div class="t b" style="left:361.5px;top:592.09px;transform:scaleX(1.0074)">Annual Billing Job</div>
<div class="pill p-light" style="top:589.79px;width:48.0px"><span style="transform:scaleX(0.9781)">Planned</span></div>
<div class="t d" style="left:698.4px;top:592.09px;transform:scaleX(0.9334)">03 Jul 2023</div>
<div class="t d" style="left:787.6px;top:592.09px;transform:scaleX(0.9247)">28 Jun 2024</div>
<div class="t d r g" style="left:901.8px;width:60px;top:592.09px;transform:scaleX(0.937)">17:00</div>
<div class="t " style="left:973.3px;top:592.09px;transform:scaleX(0.9446)">Liz Hurst</div>
<div class="t " style="left:1071.3px;top:592.09px;transform:scaleX(0.9536)">Mandy Jones</div>
<div class="t d" style="left:1345.6px;top:592.09px;transform:scaleX(0.937)">25 Sep 2024 21:57</div>
<div class="hl" style="top:634.23px"></div>
<div class="cb" style="top:617.21px"><i></i></div>
<div class="t b" style="left:64.3px;top:617.26px;transform:scaleX(0.9559)">Jacobs Family Trust</div>
<div class="t b" style="left:206.5px;top:617.26px;transform:scaleX(0.9797)">Jacobs Engineering Group</div>
<div class="t b" style="left:361.5px;top:617.26px;transform:scaleX(1.0074)">Annual Billing Job</div>
<div class="pill p-blue" style="top:614.96px;width:61.9px"><span style="transform:scaleX(0.9914)">In progress</span></div>
<div class="t d" style="left:698.4px;top:617.26px;transform:scaleX(0.9247)">22 Jun 2023</div>
<div class="t d" style="left:787.6px;top:617.26px;transform:scaleX(0.9247)">30 Jun 2024</div>
<div class="t d r g" style="left:901.8px;width:60px;top:617.26px;transform:scaleX(0.937)">32:30</div>
<div class="t " style="left:973.3px;top:617.26px;transform:scaleX(0.9446)">Liz Hurst</div>
<div class="t " style="left:1071.3px;top:617.26px;transform:scaleX(0.9398)">Jonas McCarthy</div>
<div class="t d" style="left:1345.6px;top:617.26px;transform:scaleX(0.937)">25 Jan 2024 16:12</div>
<div class="hl" style="top:659.40px"></div>
<div class="cb" style="top:642.38px"><i></i></div>
<div class="t b" style="left:64.3px;top:642.43px;transform:scaleX(0.9776)">Marshall, Frank</div>
<div class="t b" style="left:206.5px;top:642.43px;transform:scaleX(1.0039)">Marshall Group</div>
<div class="t b" style="left:361.5px;top:642.43px;transform:scaleX(0.9959)">Annual Compliance</div>
<div class="pill p-blue" style="top:640.13px;width:61.9px"><span style="transform:scaleX(0.9914)">In progress</span></div>
<div class="t d" style="left:698.4px;top:642.43px;transform:scaleX(0.9247)">22 Jun 2023</div>
<div class="t d" style="left:787.6px;top:642.43px;transform:scaleX(0.9247)">30 Jun 2024</div>
<div class="t d r g" style="left:901.8px;width:60px;top:642.43px;transform:scaleX(0.937)">38:55</div>
<div class="t " style="left:973.3px;top:642.43px;transform:scaleX(0.9446)">Liz Hurst</div>
<div class="t " style="left:1071.3px;top:642.43px;transform:scaleX(0.9398)">Jonas McCarthy</div>
<div class="t d" style="left:1345.6px;top:642.43px;transform:scaleX(0.937)">20 Oct 2024 21:44</div>
<div class="hl" style="top:684.57px"></div>
<div class="cb" style="top:667.55px"><i></i></div>
<div class="t b" style="left:64.3px;top:667.60px;transform:scaleX(0.992)">Stanley Construction Ltd</div>
<div class="t b" style="left:206.5px;top:667.60px;transform:scaleX(0.9783)">Stanley Group</div>
<div class="t b" style="left:361.5px;top:667.60px;transform:scaleX(1.0048)">Quarterly Return</div>
<div class="pill p-red" style="top:665.30px;width:76.2px"><span style="transform:scaleX(0.9626)">Ready to Send</span></div>
<div class="t d" style="left:698.4px;top:667.60px;transform:scaleX(0.9689)">01 Apr 2024</div>
<div class="t d" style="left:787.6px;top:667.60px;transform:scaleX(0.9247)">30 Jun 2024</div>
<div class="t d r g" style="left:901.8px;width:60px;top:667.60px;transform:scaleX(0.937)">08:00</div>
<div class="t " style="left:973.3px;top:667.60px;transform:scaleX(0.9446)">Liz Hurst</div>
<div class="t " style="left:1071.3px;top:667.60px;transform:scaleX(0.949)">Roger Taylor</div>
<div class="t d" style="left:1345.6px;top:667.60px;transform:scaleX(0.937)">26 Sep 2024 23:30</div>
<div class="hl" style="top:709.74px"></div>
<div class="cb" style="top:692.72px"><i></i></div>
<div class="t b" style="left:64.3px;top:692.77px;transform:scaleX(0.9823)">Allport, K J and L G</div>
<div class="t b" style="left:206.5px;top:692.77px;transform:scaleX(0.9823)">Allport, K J and L G</div>
<div class="t b" style="left:361.5px;top:692.77px;transform:scaleX(0.9762)">Tax Planning</div>
<div class="pill p-light" style="top:690.47px;width:48.0px"><span style="transform:scaleX(0.9781)">Planned</span></div>
<div class="t d" style="left:698.4px;top:692.77px;transform:scaleX(0.9689)">21 Apr 2023</div>
<div class="t d" style="left:787.6px;top:692.77px;transform:scaleX(0.9247)">30 Jun 2024</div>
<div class="t d r g" style="left:901.8px;width:60px;top:692.77px;transform:scaleX(0.937)">06:00</div>
<div class="t " style="left:973.3px;top:692.77px;transform:scaleX(0.949)">Roger Taylor</div>
<div class="t " style="left:1071.3px;top:692.77px;transform:scaleX(0.9446)">Liz Hurst</div>
<div class="t d" style="left:1345.6px;top:692.77px;transform:scaleX(0.937)">25 Sep 2024 14:12</div>
<div class="hl" style="top:734.91px"></div>
<div class="cb" style="top:717.89px"><i></i></div>
<div class="t b" style="left:64.3px;top:717.94px;transform:scaleX(0.9643)">Luke Skywalker</div>
<div class="t b" style="left:206.5px;top:717.94px;transform:scaleX(0.9705)">Star Wars Group</div>
<div class="t b" style="left:361.5px;top:717.94px;transform:scaleX(0.9873)">Tax Planning Advice</div>
<div class="pill p-blue" style="top:715.64px;width:61.9px"><span style="transform:scaleX(0.9914)">In progress</span></div>
<div class="t d" style="left:698.4px;top:717.94px;transform:scaleX(0.9247)">01 Jun 2024</div>
<div class="t d" style="left:787.6px;top:717.94px;transform:scaleX(0.9247)">30 Jun 2024</div>
<div class="t d r" style="left:901.8px;width:60px;top:717.94px;transform:scaleX(0.9299)">00:00</div>
<div class="t " style="left:973.3px;top:717.94px;transform:scaleX(0.949)">Roger Taylor</div>
<div class="t " style="left:1071.3px;top:717.94px;transform:scaleX(0.9398)">Jonas McCarthy</div>
<div class="t d" style="left:1345.6px;top:717.94px;transform:scaleX(0.937)">24 Sep 2024 14:59</div>
<div class="abs" style="left:1508.2px;top:157px;width:12.7px;height:582.5px;background:#f1f1f2"></div>
<div class="abs" style="left:1509.1px;top:171.2px;width:10.8px;height:297.4px;background:#bdbdbd"></div>
<div class="abs" style="left:1511.3px;top:163px;width:0;height:0;border-left:3.2px solid transparent;border-right:3.2px solid transparent;border-bottom:3.5px solid #8f8f8f"></div>
<div class="abs" style="left:1511.6px;top:730.7px;width:0;height:0;border-left:3.3px solid transparent;border-right:3.3px solid transparent;border-top:3.5px solid #474747"></div>
</div>
<div class="abs" style="left:1531px;top:0;width:7px;height:757px;background:linear-gradient(90deg,#6f6f6f 0%,#9c9c9c 25%,#d0d0d0 60%,#f6f6f6 90%,#fff 100%);clip-path:polygon(0 0,1.2px 0,1.2px 4px,7px 10.5px,7px 750px,0 757px)"></div>
<div class="abs" style="left:0;top:750px;width:1532px;height:7px;background:linear-gradient(180deg,#6f6f6f 0%,#9c9c9c 25%,#d0d0d0 60%,#f6f6f6 90%,#fff 100%);clip-path:polygon(0 0,4px 0.5px,10.5px 7px,1531.5px 7px,1538px 0,0 0)"></div>
</body></html>
